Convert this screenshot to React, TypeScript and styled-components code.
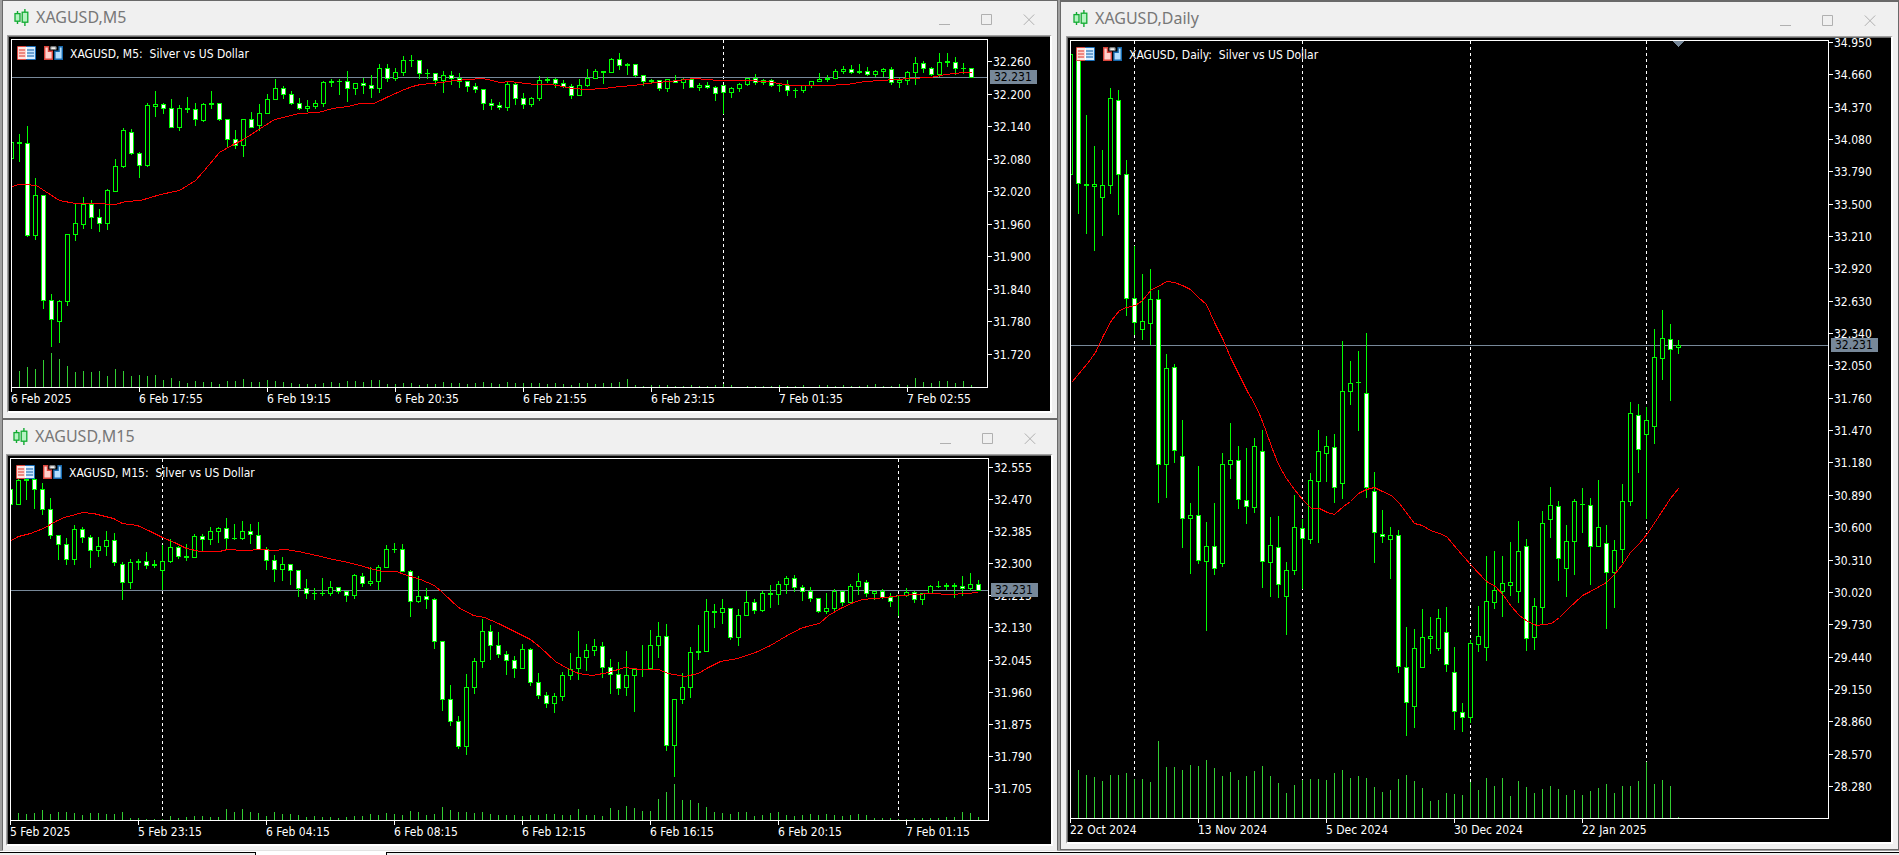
import React from "react";
import styled, { createGlobalStyle } from "styled-components";

/* ---------- theme values ---------- */

const face = "#f0f0f0";
const edge = "#696969";
const shadow = "#a0a0a0";
const slate = "#778899";
const lime = "#00ff00";

const GlobalStyle = createGlobalStyle`
  * { box-sizing: border-box; }
  body {
    margin: 0;
    background: ${face};
    font-family: "DejaVu Sans Condensed", "Open Sans", sans-serif;
    font-size: 12px;
  }
  h2, ul, p { margin: 0; padding: 0; }
  ul { list-style: none; }
`;

/* ---------- data ---------- */

/* high, body top, body bottom, low, 1 when the bar closed down */
type Candle = [number, number, number, number, number];
type Point = [number, number];

interface ChartData {
  name: string;
  period: string;
  /* terminal coordinates of the plot's inner top left corner */
  left: number;
  top: number;
  height: number;
  bid: number;
  prices: string[];
  pricesStart: number;
  pricesHeight: number;
  times: string[];
  separators: number[];
  candles: Candle[];
  volumes: number[];
  average: Point[];
  shiftMark?: number;
}

const STEP = 8;

const priceList = (first: number, step: number, count: number) =>
  Array.from({ length: count }, (_, i) => (first - i * step).toFixed(3));

const m5: ChartData = {
  name: "XAGUSD,M5",
  period: "M5",
  left: 12,
  top: 40,
  height: 347,
  bid: 77,
  prices: priceList(32.26, 0.06, 10),
  pricesStart: 20,
  pricesHeight: 302,
  times: ["6 Feb 2025", "6 Feb 17:55", "6 Feb 19:15", "6 Feb 20:35", "6 Feb 21:55", "6 Feb 23:15", "7 Feb 01:35", "7 Feb 02:55"],
  separators: [723],
  candles: [
    [142,142,158,158,0],[134,142,143,161,0],[126,143,235,236,1],[178,195,235,239,0],[195,195,300,308,1],
    [294,300,319,346,1],[300,301,321,342,0],[234,234,301,305,0],[204,223,234,240,0],[197,204,224,228,0],
    [200,204,217,228,1],[209,217,223,231,1],[189,190,223,229,0],[159,166,191,191,0],[128,130,166,167,0],
    [129,132,153,154,1],[152,153,165,177,1],[103,105,165,166,0],[91,104,106,116,0],[103,104,108,113,1],
    [99,108,127,127,1],[105,108,127,130,0],[97,108,109,112,0],[103,109,119,125,1],[103,104,120,121,0],
    [91,103,104,108,0],[103,103,119,120,1],[119,119,139,147,1],[130,139,145,148,1],[119,119,145,156,0],
    [112,119,127,127,1],[104,113,125,130,0],[94,99,113,113,0],[79,88,99,99,0],[86,88,94,98,1],
    [91,94,103,104,1],[98,103,108,109,1],[100,106,108,111,0],[100,103,106,108,0],[81,82,103,106,0],
    [79,81,82,86,0],[79,81,81,94,0],[71,81,88,101,1],[83,83,88,94,0],[78,83,85,93,1],
    [75,85,88,97,1],[64,68,88,92,0],[64,68,78,81,1],[68,72,78,80,0],[56,60,72,75,0],
    [55,60,60,66,0],[60,60,73,78,1],[69,73,73,78,0],[73,73,80,85,1],[71,75,80,92,0],
    [71,75,78,84,1],[73,78,81,87,1],[81,81,86,91,1],[83,86,89,92,1],[89,89,103,109,1],
    [99,103,105,109,1],[102,105,107,109,1],[82,84,107,110,0],[83,84,98,104,1],[93,98,104,108,1],
    [97,98,104,106,0],[76,80,98,100,0],[77,79,80,82,0],[78,79,83,87,1],[80,83,86,87,1],
    [84,86,95,98,1],[79,85,95,95,0],[69,78,85,86,0],[69,71,78,78,0],[71,71,72,83,0],
    [58,59,72,72,0],[53,59,65,69,1],[63,64,65,74,0],[64,64,75,76,1],[75,75,81,85,1],
    [79,80,81,83,0],[80,80,88,90,1],[79,79,88,91,0],[75,80,82,82,1],[78,79,82,88,0],
    [79,79,87,87,1],[83,85,87,90,0],[82,85,87,88,1],[86,87,93,100,1],[85,85,92,113,1],
    [87,88,92,97,0],[83,84,88,91,0],[78,78,84,85,0],[74,78,82,84,1],[79,80,82,84,0],
    [79,80,85,86,1],[84,85,85,91,0],[80,85,90,95,1],[88,90,90,97,0],[85,85,90,92,0],
    [81,81,85,87,0],[73,79,81,81,0],[75,78,79,81,0],[69,71,78,78,0],[66,69,71,73,0],
    [65,69,72,73,1],[64,71,72,73,0],[67,71,74,75,1],[70,71,74,76,0],[68,69,71,76,0],
    [67,69,82,84,1],[78,80,82,87,0],[71,72,80,84,0],[57,63,72,84,0],[61,63,68,72,1],
    [67,68,74,75,1],[53,62,74,76,0],[53,61,62,66,0],[57,62,68,74,1],[63,68,68,73,0],
    [68,68,77,77,1],
  ],
  volumes: [
    0,16,20,18,27,34,28,21,15,16,15,16,11,18,16,11,12,11,12,7,9,6,4,6,5,5,3,6,6,8,5,5,7,6,5,4,3,3,3,4,5,4,6,
    6,5,7,7,3,3,4,4,2,3,3,5,4,4,3,4,5,4,3,5,4,4,4,4,3,4,3,2,4,4,3,4,4,5,8,2,1,2,2,2,1,1,2,1,1,
    2,3,2,0,1,1,1,1,2,1,1,2,0,2,2,1,2,1,1,2,3,1,1,3,2,9,5,4,6,6,4,6,2,
  ],
  average: [
    [12,186],[18,184],[24,184],[36,185],[42,189],[59,200],[75,203],[96,203],[115,204],[125,201],[140,200],
    [160,194],[179,190],[187,185],[195,180],[203,171],[219,152],[233,144],[243,139],[260,128],[274,119],
    [291,115],[298,113],[318,112],[332,108],[347,106],[360,103],[373,103],[380,100],[388,96],[395,93],
    [404,89],[412,86],[420,84],[442,82],[454,80],[470,79],[480,78],[488,79],[499,82],[510,81],[525,83],
    [535,84],[550,84],[562,86],[572,88],[586,89],[604,88],[620,86],[633,85],[655,82],[670,81],[685,79],
    [695,78],[705,79],[720,80],[745,80],[767,81],[778,83],[792,85],[825,85],[847,84],[865,81],[880,80],
    [895,79],[910,78],[930,77],[945,74],[963,72],[971,72],
  ],
};

const m15: ChartData = {
  name: "XAGUSD,M15",
  period: "M15",
  left: 11,
  top: 44,
  height: 361,
  bid: 175,
  prices: priceList(32.555, 0.085, 11),
  pricesStart: 7,
  pricesHeight: 330,
  times: ["5 Feb 2025", "5 Feb 23:15", "6 Feb 04:15", "6 Feb 08:15", "6 Feb 12:15", "6 Feb 16:15", "6 Feb 20:15", "7 Feb 01:15"],
  separators: [162, 898],
  candles: [
    [74,74,89,89,1],[63,65,89,89,0],[63,64,65,84,0],[63,64,74,93,1],[68,74,94,99,1],
    [83,94,120,123,1],[120,120,129,144,1],[123,129,144,149,1],[110,114,144,149,0],[112,114,122,127,1],
    [120,122,135,152,1],[122,131,135,141,0],[116,125,131,140,0],[118,125,147,150,1],[147,149,167,184,1],
    [144,147,167,173,0],[144,146,147,154,0],[137,146,150,153,1],[145,149,150,152,0],[130,146,155,174,0],
    [124,132,146,147,0],[131,132,141,143,1],[129,141,142,145,0],[119,121,142,142,0],[119,121,124,135,1],
    [112,116,124,129,0],[112,113,116,127,0],[103,113,123,133,1],[109,123,123,124,0],[106,116,123,124,0],
    [109,116,119,128,1],[107,120,134,134,1],[132,134,145,154,1],[140,145,154,166,1],[142,149,154,165,0],
    [149,149,155,169,1],[155,155,173,181,1],[164,173,178,183,1],[173,178,178,184,0],[163,178,178,180,0],
    [166,172,178,180,0],[172,172,176,178,1],[176,176,180,186,1],[159,160,180,183,0],[158,161,168,171,1],
    [152,166,168,170,0],[150,152,166,174,0],[130,134,152,152,0],[128,134,134,137,0],[129,134,156,156,1],
    [155,156,186,201,1],[161,181,186,187,0],[173,181,184,193,1],[183,184,226,233,1],[226,226,284,295,1],
    [270,284,306,310,1],[301,306,331,333,1],[259,272,331,339,0],[243,246,272,278,0],[204,216,246,252,0],
    [210,216,230,244,1],[217,230,239,242,1],[236,239,245,259,1],[241,245,253,262,1],[229,234,253,253,0],
    [233,234,267,270,1],[258,267,280,283,1],[277,280,288,292,1],[278,281,288,297,0],[257,260,281,285,0],
    [238,254,260,264,0],[216,242,253,264,0],[229,235,242,255,0],[224,231,235,240,0],[227,231,252,262,1],
    [244,252,259,278,1],[247,259,273,279,1],[236,260,272,280,0],[254,254,260,296,0],[230,254,254,261,0],
    [215,230,253,253,0],[207,221,230,242,0],[209,221,330,335,1],[284,284,330,361,0],[258,272,284,288,0],
    [232,237,272,282,0],[210,236,237,244,0],[184,196,236,236,0],[189,196,197,212,0],[184,193,197,208,0],
    [193,193,222,224,1],[194,200,222,230,0],[176,187,200,200,0],[184,187,195,198,1],[176,178,195,196,0],
    [170,178,179,192,0],[166,169,179,189,0],[161,163,169,178,0],[160,163,172,176,1],[170,172,176,185,1],
    [172,176,183,186,1],[183,183,196,197,1],[178,193,196,198,0],[174,176,193,195,0],[176,176,187,190,1],
    [169,171,187,187,0],[158,166,171,179,0],[165,167,178,181,1],[176,176,178,184,0],[174,176,182,183,1],
    [178,182,186,191,1],[180,180,180,200,0],[173,177,180,181,0],[176,177,184,187,1],[178,178,184,189,0],
    [170,171,178,178,0],[166,171,171,172,0],[168,170,171,174,0],[168,170,171,182,0],[161,171,173,180,1],
    [158,169,173,175,0],[165,169,175,175,1],
  ],
  volumes: [
    0,7,6,7,10,6,8,8,7,5,7,7,6,6,8,2,2,1,1,1,4,2,3,4,4,3,3,11,8,11,8,7,4,8,6,6,5,3,4,3,3,2,3,4,
    4,6,5,7,6,5,9,8,5,6,13,10,8,8,7,8,6,5,5,5,4,5,5,6,6,5,5,11,5,5,4,12,10,14,12,9,9,21,28,36,20,20,17,13,
    8,7,6,8,8,4,5,7,8,5,4,5,6,5,6,5,4,5,6,5,2,2,2,1,1,2,2,2,2,3,3,8,7,3,
  ],
  average: [
    [11,125],[18,121],[30,118],[43,113],[57,105],[64,102],[75,99],[82,97],[93,98],[105,101],[113,103],
    [122,108],[137,110],[150,116],[162,122],[174,127],[186,133],[200,136],[219,136],[227,134],[244,135],
    [262,134],[272,135],[285,134],[298,136],[316,140],[333,144],[348,147],[363,151],[373,154],[383,156],
    [396,156],[404,159],[420,164],[434,170],[443,178],[458,192],[473,200],[484,202],[498,208],[514,216],
    [530,224],[540,232],[555,246],[567,253],[578,258],[592,260],[608,257],[624,252],[640,254],[658,254],
    [668,258],[684,261],[698,258],[708,252],[720,246],[737,243],[755,237],[770,230],[785,221],[800,213],
    [810,210],[819,208],[828,200],[840,193],[853,187],[862,184],[885,182],[900,180],[930,178],[950,179],
    [965,178],[978,177],
  ],
};

const daily: ChartData = {
  name: "XAGUSD,Daily",
  period: "Daily",
  left: 1071,
  top: 41,
  height: 777,
  bid: 345,
  prices: priceList(34.95, 0.29, 24),
  pricesStart: 0,
  pricesHeight: 753,
  times: ["22 Oct 2024", "13 Nov 2024", "5 Dec 2024", "30 Dec 2024", "22 Jan 2025"],
  separators: [1134, 1302, 1470, 1646],
  candles: [
    [54,54,174,174,0],[47,59,183,213,1],[115,184,185,233,0],[146,184,186,250,0],[150,185,197,235,0],
    [88,98,185,193,0],[90,100,174,214,1],[160,174,298,315,1],[246,298,322,334,1],[274,321,329,339,0],
    [269,299,323,344,0],[290,299,464,502,1],[354,368,464,497,0],[364,367,450,462,1],[420,456,518,547,1],
    [503,515,518,573,0],[466,515,560,563,1],[522,546,561,630,0],[503,546,568,574,1],[453,464,563,566,0],
    [423,460,464,478,0],[446,460,499,508,1],[448,500,506,523,1],[438,446,507,512,0],[430,451,561,587,1],
    [517,545,562,596,0],[516,547,584,597,1],[562,570,596,634,0],[495,527,570,574,0],[519,528,538,588,1],
    [473,480,539,543,0],[430,451,481,542,0],[436,446,453,481,0],[434,447,487,502,1],[341,391,483,498,0],
    [361,383,391,404,0],[351,382,382,430,0],[333,393,487,497,1],[472,491,532,562,1],[510,534,536,542,1],
    [527,535,539,578,0],[530,535,666,672,1],[627,667,702,735,1],[629,648,706,727,0],[609,637,667,667,0],
    [617,636,638,653,0],[609,618,648,650,0],[607,632,664,671,1],[647,672,711,729,1],[703,712,717,731,1],
    [640,643,717,722,0],[606,636,644,651,0],[556,601,647,660,0],[551,590,602,608,0],[556,583,591,616,0],
    [542,582,585,595,0],[521,551,591,602,0],[539,546,638,650,1],[598,606,637,649,0],[511,523,607,623,0],
    [487,505,519,537,0],[501,506,558,580,1],[525,541,568,596,0],[499,501,541,574,0],[488,504,504,532,0],
    [498,505,546,584,1],[480,527,546,546,0],[525,543,572,628,1],[540,550,572,607,0],[484,501,549,562,0],
    [402,413,501,505,0],[404,415,449,472,1],[407,420,434,518,0],[329,357,426,443,0],[310,338,358,379,0],
    [324,339,349,400,1],[340,345,347,353,0],
  ],
  volumes: [
    0,48,43,41,37,43,43,45,39,39,36,77,51,51,48,53,52,58,50,42,46,38,42,47,52,42,35,25,33,38,39,39,38,45,48,
    40,42,40,31,26,28,39,43,37,30,17,18,25,24,23,36,28,40,32,40,22,37,31,25,29,32,29,23,28,23,27,30,34,25,
    32,32,37,56,34,38,32,1,
  ],
  average: [
    [1071,382],[1087,363],[1095,352],[1103,335],[1111,320],[1119,310],[1126,307],[1135,305],[1142,300],
    [1151,289],[1158,286],[1166,281],[1174,282],[1182,285],[1190,289],[1198,297],[1206,304],[1214,322],
    [1223,340],[1230,357],[1238,373],[1247,391],[1254,403],[1260,416],[1265,429],[1271,446],[1278,464],
    [1286,478],[1294,489],[1302,499],[1311,508],[1319,508],[1327,512],[1334,514],[1343,506],[1350,501],
    [1358,493],[1366,489],[1374,487],[1382,491],[1391,495],[1399,503],[1414,523],[1422,525],[1430,530],
    [1439,533],[1446,536],[1457,549],[1470,564],[1486,581],[1495,586],[1503,595],[1511,606],[1519,615],
    [1527,621],[1536,625],[1551,623],[1559,617],[1567,609],[1582,595],[1590,591],[1606,582],[1614,574],
    [1622,564],[1630,552],[1639,543],[1647,533],[1655,521],[1670,498],[1678,488],
  ],
  shiftMark: 1678,
};

/* ---------- layout ---------- */

const Workspace = styled.main`
  display: grid;
  grid-template-columns: minmax(0, 1056fr) minmax(0, 839fr);
  column-gap: 2px;
  align-items: start;
  padding-left: 2px;
  background: ${shadow};
`;

const Column = styled.div`
  display: flex;
  flex-direction: column;
`;

const Frame = styled.section<{ $pad: string; $top?: number; $bottom?: string }>`
  padding: ${(p) => p.$pad};
  background: ${face};
  border: 1px solid ${edge};
  border-top-width: ${(p) => p.$top ?? 1}px;
  border-bottom-color: ${(p) => p.$bottom ?? edge};
`;

const TitleBar = styled.header`
  display: flex;
  align-items: center;
  height: 34px;
  padding: 0 2px 1px 7px;
`;

const Title = styled.h2`
  flex: 1;
  margin-left: 7px;
  color: #777777;
  font: 400 16px/19px "Noto Sans", "Open Sans", sans-serif;
`;

const CaptionButton = styled.button`
  display: grid;
  place-items: center;
  width: 42px;
  height: 33px;
  padding: 5px 0 0;
  color: #b0b0b0;
  background: transparent;
  border: 0;
`;

const Sunken = styled.div`
  background: #000000;
  border: solid;
  border-width: 1px 2px 2px 1px;
  border-color: ${shadow} #ffffff #ffffff ${shadow};
`;

const Chart = styled.div`
  display: grid;
  grid-template-columns: minmax(0, 1fr) 62px;
  padding-left: 2px;
  border: solid ${edge};
  border-width: 1px 0 0 1px;
  color: #ffffff;
`;

const Plot = styled.div`
  position: relative;
  margin-top: 2px;
  border: 1px solid #ffffff;
`;

const Drawing = styled.svg`
  display: block;
  width: 100%;
`;

const Legend = styled.div`
  position: absolute;
  top: 6px;
  left: 5px;
  display: flex;
  align-items: flex-start;
`;

const LegendIcon = styled.svg`
  width: 19px;
  height: 14px;
  margin-right: 8px;
`;

const LegendText = styled.p`
  margin-left: -1px;
  line-height: 16px;
  white-space: pre;
`;

const PriceAxis = styled.div<{ $start: number }>`
  position: relative;
  padding-top: ${(p) => p.$start}px;
`;

const PriceList = styled.ul<{ $height: number }>`
  display: flex;
  flex-direction: column;
  justify-content: space-between;
  height: ${(p) => p.$height}px;
`;

const Price = styled.li`
  display: flex;
  gap: 1px;
  height: 9px;
  line-height: 11px;

  &::before {
    content: "";
    width: 4px;
    height: 1px;
    margin-top: 4px;
    background: #ffffff;
  }
`;

const BidTag = styled.span<{ $top: number }>`
  position: absolute;
  top: ${(p) => p.$top}px;
  left: 2px;
  width: 47px;
  height: 14px;
  padding-left: 4px;
  color: #000000;
  background: ${slate};
  line-height: 15px;
`;

const TimeAxis = styled.ul`
  display: flex;
  height: 23px;
  overflow: hidden;
`;

const Time = styled.li`
  flex: 0 0 128px;
  line-height: 14px;
  text-indent: -1px;
  white-space: nowrap;

  &::before {
    content: "";
    display: block;
    width: 1px;
    height: 4px;
    background: #ffffff;
  }
`;

const TabStrip = styled.footer`
  display: grid;
  grid-template-columns: 256px 130px 1fr;
  height: 4px;
  padding-top: 1px;
  background: #ffffff;
`;

const TabEdge = styled.div<{ $side: "left" | "right" }>`
  background: ${face};
  border-top: 1px solid #000000;
  border-${(p) => p.$side}: 1px solid #000000;
`;

/* ---------- icons ---------- */

const CandlesIcon = () => (
  <svg width="15" height="17" viewBox="0 0 15 17" aria-hidden="true">
    <g stroke="#12ab32" fill="#b5f3c1">
      <path d="M3.5 2v13" strokeWidth="1.4" />
      <path d="M10.9 0v17" strokeWidth="1.4" />
      <rect x="1" y="4.6" width="5" height="7.6" strokeWidth="1.3" />
      <rect x="8.2" y="3.2" width="5.6" height="10" strokeWidth="1.3" />
    </g>
  </svg>
);

const DepthIcon = () => (
  <LegendIcon viewBox="0 0 19 14" aria-hidden="true">
    <rect width="10" height="14" rx="1" fill="#dc4a42" />
    <rect x="9" width="10" height="14" rx="1" fill="#1b6fb8" />
    <rect x="1" y="1" width="8" height="12" fill="#ffd5d0" />
    <rect x="10" y="1" width="8" height="12" fill="#c4e4ff" />
    <path d="M2 4h6M2 7h6M2 10h6" stroke="#dd3a30" />
    <path d="M10 4h7M10 7h7M10 10h7" stroke="#1561a5" />
    <path d="M1 2h17M1 12h17" stroke="#ffffff" strokeWidth="0.8" />
    <path d="M9.5 1v12" stroke="#ffffff" />
  </LegendIcon>
);

const TradeIcon = () => (
  <LegendIcon viewBox="0 0 19 14" aria-hidden="true">
    <path d="M0.7 0.7h3.8v4.6h3.8v8h-7.6z" fill="#ffd0cb" stroke="#d9453c" strokeWidth="1.4" />
    <path d="M18.3 0.7h-3.2v4.6h-4.2v8h7.4z" fill="#b3deff" stroke="#1668ad" strokeWidth="1.4" />
    <rect x="6.6" y="0.7" width="5.6" height="2.8" rx="1" fill="#f2f2f2" stroke="#777777" strokeWidth="1.2" />
  </LegendIcon>
);

const captionPaths = [
  { label: "Minimize", d: "M0 10.5h11" },
  { label: "Maximize", d: "M0.5 0.5h10v10h-10z" },
  { label: "Close", d: "M0.8 0.5l10.4 10.4M11.2 0.5L0.8 10.9" },
];

/* ---------- chart parts ---------- */

const Bars = ({ data }: { data: ChartData }) => {
  const x = (i: number) => data.left - 1 + i * STEP;
  const floor = data.top + data.height;
  return (
    <>
      {data.volumes.map((v, i) => (
        <rect key={`v${i}`} x={x(i)} y={floor - v} width={1} height={v} fill="#32cd32" />
      ))}
      {data.candles.map(([high, top, bottom, low, down], i) => (
        <g key={i}>
          <rect x={x(i)} y={high} width={1} height={low - high + 1} fill={lime} />
          <rect x={x(i) - 2} y={top} width={5} height={bottom - top + 1} fill={lime} />
          {bottom - top > 1 && (
            <rect x={x(i) - 1} y={top + 1} width={3} height={bottom - top - 1} fill={down ? "#ffffff" : "#000000"} />
          )}
        </g>
      ))}
    </>
  );
};

const ChartWindow = ({ data, pad, top, bottom }: { data: ChartData; pad: string; top?: number; bottom?: string }) => (
  <Frame $pad={pad} $top={top} $bottom={bottom} aria-label={data.name}>
    <TitleBar>
      <CandlesIcon />
      <Title>{data.name}</Title>
      {captionPaths.map(({ label, d }) => (
        <CaptionButton key={label} type="button" aria-label={label}>
          <svg width="12" height="12" viewBox="0 0 12 12" fill="none" stroke="currentColor">
            <path d={d} />
          </svg>
        </CaptionButton>
      ))}
    </TitleBar>
    <Sunken>
      <Chart>
        <Plot>
          <Drawing height={data.height} shapeRendering="crispEdges" role="img" aria-label={`${data.name} price chart`}>
            <g transform={`translate(${-data.left} ${-data.top})`}>
              {data.separators.map((x) => (
                <path key={x} d={`M${x + 0.5} ${data.top}v${data.height}`} stroke="#ffffff" strokeDasharray="3 3" />
              ))}
            </g>
            <rect y={data.bid - data.top} width="100%" height={1} fill={slate} />
            <g transform={`translate(${-data.left} ${-data.top})`}>
              <Bars data={data} />
              <polyline
                points={data.average.map(([x, y]) => `${x + 0.5},${y + 0.5}`).join(" ")}
                fill="none"
                stroke="#ff0000"
              />
              {data.shiftMark && (
                <path d={`M${data.shiftMark - 5} ${data.top}h11l-5.5 6z`} fill={slate} />
              )}
            </g>
          </Drawing>
          <Legend>
            <DepthIcon />
            <TradeIcon />
            <LegendText>{`XAGUSD, ${data.period}:  Silver vs US Dollar`}</LegendText>
          </Legend>
        </Plot>
        <PriceAxis $start={data.pricesStart}>
          <PriceList $height={data.pricesHeight}>
            {data.prices.map((p) => (
              <Price key={p}>{p}</Price>
            ))}
          </PriceList>
          <BidTag $top={data.bid - data.top - 4}>32.231</BidTag>
        </PriceAxis>
        <TimeAxis>
          {data.times.map((t) => (
            <Time key={t}>{t}</Time>
          ))}
        </TimeAxis>
      </Chart>
    </Sunken>
  </Frame>
);

export default function App() {
  return (
    <>
      <GlobalStyle />
      <Workspace>
        <Column>
          <ChartWindow data={m5} pad="0 5px 5px 4px" />
          <ChartWindow data={m15} pad="0 4px 4px 3px" bottom="#e3e3e3" />
        </Column>
        <ChartWindow data={daily} pad="0 5px 5px 5px" top={2} />
      </Workspace>
      <TabStrip>
        <TabEdge $side="right" />
        <span />
        <TabEdge $side="left" />
      </TabStrip>
    </>
  );
}
